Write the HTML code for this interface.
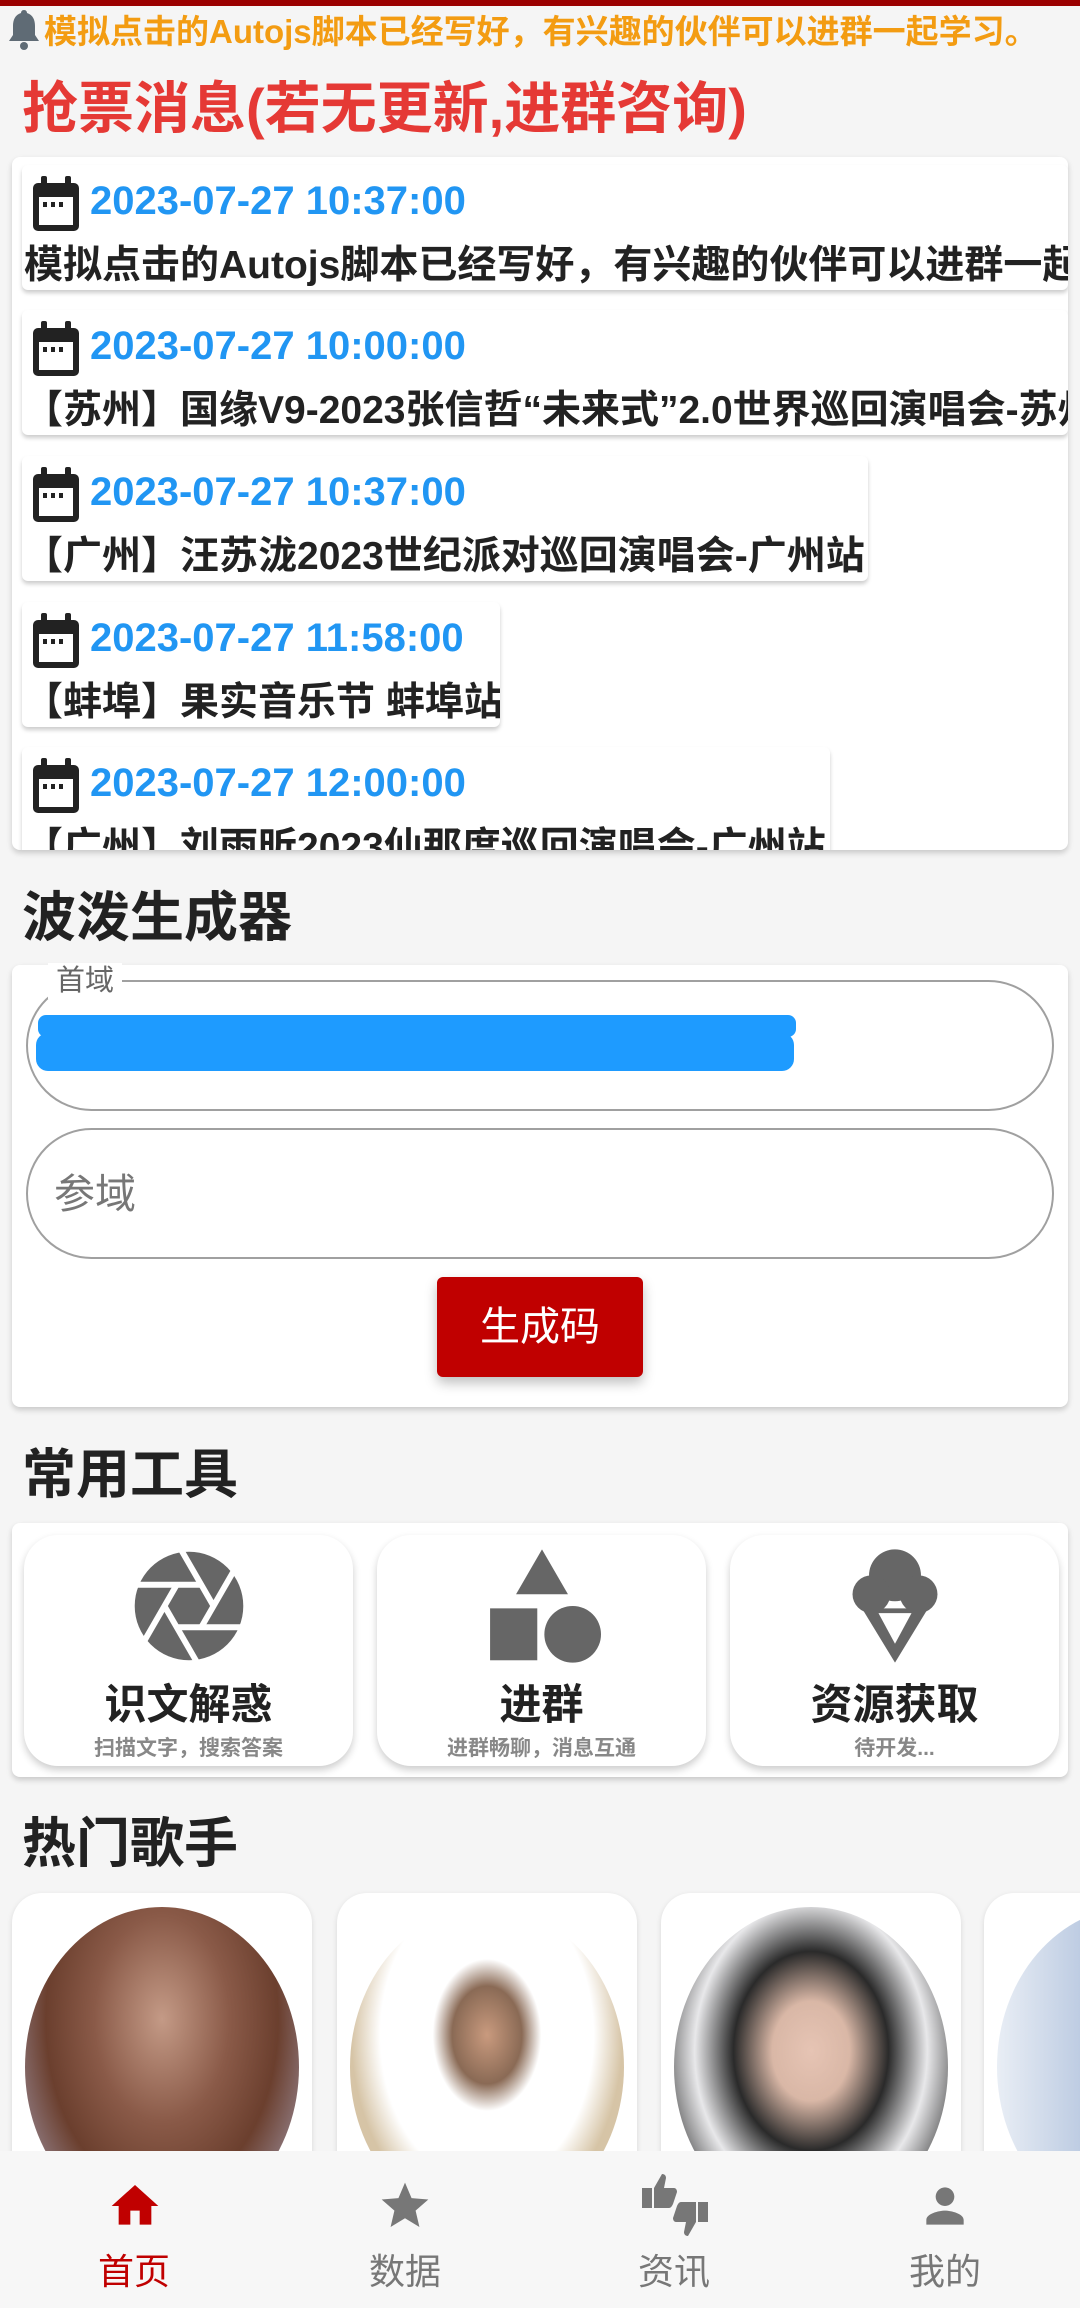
<!DOCTYPE html>
<html><head><meta charset="utf-8"><style>
*{margin:0;padding:0;box-sizing:border-box}
body{width:1080px;height:2308px;background:#f5f5f5;position:relative;overflow:hidden;font-family:"Liberation Sans","Noto Sans CJK SC",sans-serif}
.a{position:absolute;white-space:nowrap}
.card{position:absolute;background:#fff;border-radius:8px;box-shadow:0 3px 6px rgba(0,0,0,.18)}
.item{position:absolute;left:10px;background:#fff;border-radius:6px;box-shadow:0 3px 4px rgba(0,0,0,.2);overflow:hidden}
.date{position:absolute;left:68px;top:11px;font-size:40px;line-height:50px;font-weight:bold;color:#2196f3}
.txt{position:absolute;left:2px;top:78px;font-size:39px;line-height:46px;font-weight:bold;color:#222;white-space:nowrap}
.cal{position:absolute;left:8px;top:10px}
.h{font-size:54px;font-weight:bold;color:#222;line-height:64px}
.tool{position:absolute;top:1535px;width:329px;height:231px;background:#fff;border-radius:34px;box-shadow:0 4px 8px rgba(0,0,0,.2)}
.tool .t{position:absolute;left:0;right:0;top:144px;text-align:center;font-size:42px;font-weight:bold;color:#222;line-height:52px}
.tool .s{position:absolute;left:0;right:0;top:201px;text-align:center;font-size:21px;color:#888;line-height:26px;font-weight:bold}
.tool svg{position:absolute;left:106px;top:12px}
.sing{position:absolute;top:1893px;width:300px;height:300px;background:#fff;border-radius:30px;box-shadow:0 2px 6px rgba(0,0,0,.12);overflow:hidden}
.sing div{position:absolute;left:13px;top:14px;width:274px;height:320px;border-radius:50%}
.nav{position:absolute;left:0;top:2151px;width:1080px;height:157px;background:#f7f7f7}
.nl{position:absolute;top:2250px;width:160px;text-align:center;font-size:36px;line-height:44px;color:#777}
</style></head><body>
<div class="a" style="left:0;top:0;width:1080px;height:6px;background:#9b0000"></div>
<svg class="a" style="left:6px;top:8px" width="36" height="44" viewBox="0 0 36 44"><path d="M18 2c-2 0-3 1.5-3 3C9 7 7 12 7 18v9l-4 6h30l-4-6v-9c0-6-2-11-8-13 0-1.5-1-3-3-3z" fill="#5f6b75"/><circle cx="18" cy="38" r="4" fill="#5f6b75"/></svg>
<div class="a" style="left:44px;top:12px;font-size:33px;line-height:40px;font-weight:bold;color:#f39c12">模拟点击的Autojs脚本已经写好，有兴趣的伙伴可以进群一起学习。</div>
<div class="a" style="left:22px;top:76px;font-size:56px;line-height:66px;font-weight:bold;color:#e53935">抢票消息(若无更新,进群咨询)</div>

<div class="card" style="left:12px;top:157px;width:1056px;height:693px;overflow:hidden">
 <div class="item" style="top:8px;width:1046px;height:125px"><svg class="cal" width="52" height="58" viewBox="0 0 52 58"><rect x="3" y="8" width="46" height="48" rx="5" fill="#222"/><rect x="9" y="22" width="34" height="28" fill="#fff"/><rect x="11" y="1" width="6" height="12" rx="2" fill="#222"/><rect x="35" y="1" width="6" height="12" rx="2" fill="#222"/><rect x="13" y="27" width="4" height="5" fill="#222"/><rect x="21" y="27" width="4" height="5" fill="#222"/><rect x="29" y="27" width="4" height="5" fill="#222"/></svg><div class="date">2023-07-27 10:37:00</div><div class="txt">模拟点击的Autojs脚本已经写好，有兴趣的伙伴可以进群一起学习。</div></div>
 <div class="item" style="top:153px;width:1046px;height:125px"><svg class="cal" width="52" height="58" viewBox="0 0 52 58"><rect x="3" y="8" width="46" height="48" rx="5" fill="#222"/><rect x="9" y="22" width="34" height="28" fill="#fff"/><rect x="11" y="1" width="6" height="12" rx="2" fill="#222"/><rect x="35" y="1" width="6" height="12" rx="2" fill="#222"/><rect x="13" y="27" width="4" height="5" fill="#222"/><rect x="21" y="27" width="4" height="5" fill="#222"/><rect x="29" y="27" width="4" height="5" fill="#222"/></svg><div class="date">2023-07-27 10:00:00</div><div class="txt" style="font-weight:600">【苏州】国缘V9-2023张信哲“未来式”2.0世界巡回演唱会-苏州站</div></div>
 <div class="item" style="top:299px;width:846px;height:125px"><svg class="cal" width="52" height="58" viewBox="0 0 52 58"><rect x="3" y="8" width="46" height="48" rx="5" fill="#222"/><rect x="9" y="22" width="34" height="28" fill="#fff"/><rect x="11" y="1" width="6" height="12" rx="2" fill="#222"/><rect x="35" y="1" width="6" height="12" rx="2" fill="#222"/><rect x="13" y="27" width="4" height="5" fill="#222"/><rect x="21" y="27" width="4" height="5" fill="#222"/><rect x="29" y="27" width="4" height="5" fill="#222"/></svg><div class="date">2023-07-27 10:37:00</div><div class="txt" style="font-weight:600">【广州】汪苏泷2023世纪派对巡回演唱会-广州站</div></div>
 <div class="item" style="top:445px;width:478px;height:125px"><svg class="cal" width="52" height="58" viewBox="0 0 52 58"><rect x="3" y="8" width="46" height="48" rx="5" fill="#222"/><rect x="9" y="22" width="34" height="28" fill="#fff"/><rect x="11" y="1" width="6" height="12" rx="2" fill="#222"/><rect x="35" y="1" width="6" height="12" rx="2" fill="#222"/><rect x="13" y="27" width="4" height="5" fill="#222"/><rect x="21" y="27" width="4" height="5" fill="#222"/><rect x="29" y="27" width="4" height="5" fill="#222"/></svg><div class="date">2023-07-27 11:58:00</div><div class="txt" style="font-weight:600">【蚌埠】果实音乐节 蚌埠站</div></div>
 <div class="item" style="top:590px;width:808px;height:125px"><svg class="cal" width="52" height="58" viewBox="0 0 52 58"><rect x="3" y="8" width="46" height="48" rx="5" fill="#222"/><rect x="9" y="22" width="34" height="28" fill="#fff"/><rect x="11" y="1" width="6" height="12" rx="2" fill="#222"/><rect x="35" y="1" width="6" height="12" rx="2" fill="#222"/><rect x="13" y="27" width="4" height="5" fill="#222"/><rect x="21" y="27" width="4" height="5" fill="#222"/><rect x="29" y="27" width="4" height="5" fill="#222"/></svg><div class="date">2023-07-27 12:00:00</div><div class="txt" style="font-weight:600">【广州】刘雨昕2023仙那度巡回演唱会-广州站</div></div>
</div>

<div class="a h" style="left:22px;top:886px">波泼生成器</div>
<div class="card" style="left:12px;top:965px;width:1056px;height:442px">
 <div class="a" style="left:14px;top:15px;width:1028px;height:131px;border:2px solid #a0a0a0;border-radius:66px"></div>
 <div class="a" style="left:36px;top:-2px;padding:0 8px;background:#fff;font-size:29px;line-height:36px;color:#666">首域</div>
 <div class="a" style="left:26px;top:50px;width:758px;height:22px;background:#1e9bff;border-radius:8px"></div>
 <div class="a" style="left:24px;top:68px;width:758px;height:38px;background:#1e9bff;border-radius:12px"></div>
 <div class="a" style="left:14px;top:163px;width:1028px;height:131px;border:2px solid #a0a0a0;border-radius:66px"></div>
 <div class="a" style="left:42px;top:204px;font-size:41px;line-height:50px;color:#777">参域</div>
 <div class="a" style="left:425px;top:312px;width:206px;height:100px;background:#c00000;border-radius:6px;box-shadow:0 6px 12px rgba(0,0,0,.25);color:#fff;font-size:40px;line-height:100px;text-align:center">生成码</div>
</div>

<div class="a h" style="left:22px;top:1443px">常用工具</div>
<div class="card" style="left:12px;top:1523px;width:1056px;height:254px"></div>
<div class="tool" style="left:24px"><svg width="118" height="118" viewBox="0 0 100 100"><circle cx="50" cy="50" r="46" fill="#666"/><g stroke="#fff" stroke-width="5"><line x1="39.6" y1="68" x2="100" y2="68"/><line x1="29.2" y1="50" x2="59.4" y2="102.3"/><line x1="39.6" y1="32" x2="9.4" y2="84.3"/><line x1="60.4" y1="32" x2="0" y2="32"/><line x1="70.8" y1="50" x2="40.6" y2="-2.3"/><line x1="60.4" y1="68" x2="90.6" y2="15.7"/></g></svg><div class="t">识文解惑</div><div class="s">扫描文字，搜索答案</div></div>
<div class="tool" style="left:377px"><svg width="118" height="118" viewBox="0 0 100 100"><polygon points="50,2 72,40 28,40" fill="#666"/><rect x="6" y="52" width="40" height="44" fill="#666"/><ellipse cx="76" cy="74" rx="24" ry="24" fill="#666"/></svg><div class="t">进群</div><div class="s">进群畅聊，消息互通</div></div>
<div class="tool" style="left:730px"><svg width="118" height="118" viewBox="0 0 100 100"><circle cx="50" cy="24" r="22" fill="#666"/><circle cx="30" cy="40" r="16" fill="#666"/><circle cx="70" cy="40" r="16" fill="#666"/><path d="M22 52L50 98L78 52Z" fill="#666"/><path d="M36 56L50 82L64 56Z" fill="#fff"/></svg><div class="t">资源获取</div><div class="s">待开发...</div></div>

<div class="a h" style="left:22px;top:1812px">热门歌手</div>
<div class="sing" style="left:12px"><div style="background:radial-gradient(ellipse at 50% 35%,#c49a86 0,#8a5a48 35%,#6b3f2e 60%,#8f7a80 80%)"></div></div>
<div class="sing" style="left:337px"><div style="background:radial-gradient(ellipse at 50% 40%,#c99a7e 0,#8a6a55 18%,#fff 28%,#fff 55%,#d6c4a6 70%)"></div></div>
<div class="sing" style="left:661px"><div style="background:radial-gradient(ellipse at 50% 45%,#e6c4b4 0,#d9b7a6 20%,#2a2a2a 40%,#e8e8ea 60%,#222 85%)"></div></div>
<div class="sing" style="left:984px"><div style="background:linear-gradient(90deg,#e9eef5,#5b7fb8)"></div></div>

<div class="nav"></div>
<svg class="a" style="left:107px;top:2178px" width="56" height="56" viewBox="0 0 24 24"><path d="M10 20v-6h4v6h5v-8h3L12 3 2 12h3v8z" fill="#c00000"/></svg>
<svg class="a" style="left:377px;top:2178px" width="56" height="56" viewBox="0 0 24 24"><path d="M12 17.27L18.18 21l-1.64-7.03L22 9.24l-7.19-.61L12 2 9.19 8.63 2 9.24l5.46 4.73L5.82 21z" fill="#777"/></svg>
<svg class="a" style="left:640px;top:2172px" width="70" height="66" viewBox="0 0 70 66"><path d="M2 16h10v20H2zM14 16l8-14c3 0 4 2 4 4l-2 10h10c2 0 3 2 3 4l-4 12c-1 2-2 4-4 4H14z" fill="#777"/><path d="M68 50H58V30h10zM56 50l-8 14c-3 0-4-2-4-4l2-10H36c-2 0-3-2-3-4l4-12c1-2 2-4 4-4h15z" fill="#777"/></svg>
<svg class="a" style="left:917px;top:2178px" width="56" height="56" viewBox="0 0 24 24"><path d="M12 12c2.21 0 4-1.790 4-4s-1.79-4-4-4-4 1.79-4 4 1.79 4 4 4zm0 2c-2.67 0-8 1.34-8 4v2h16v-2c0-2.66-5.33-4-8-4z" fill="#777"/></svg>
<div class="nl" style="left:54px;color:#c00000">首页</div>
<div class="nl" style="left:325px">数据</div>
<div class="nl" style="left:594px">资讯</div>
<div class="nl" style="left:865px">我的</div>
</body></html>
